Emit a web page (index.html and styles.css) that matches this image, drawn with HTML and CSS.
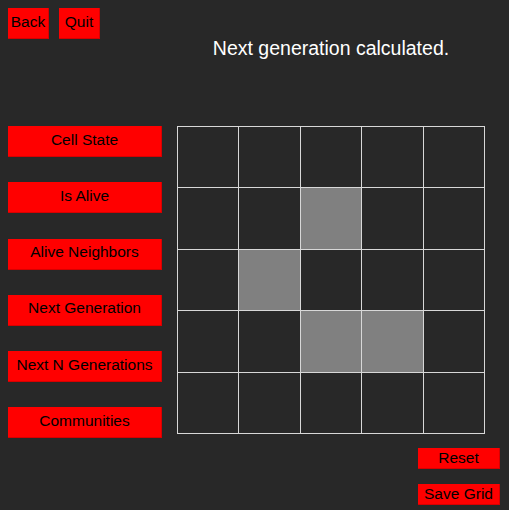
FILE: index.html
```html
<!DOCTYPE html>
<html>
<head>
<meta charset="utf-8">
<link rel="stylesheet" href="styles.css">
</head>
<body>
<div class="app">
  <div class="header-left">
    <button class="btn small">Back</button>
    <button class="btn small">Quit</button>
  </div>
  <div class="header-right">
    <div class="status">Next generation calculated.</div>
  </div>
  <div class="actions">
    <button class="btn wide">Cell State</button>
    <button class="btn wide">Is Alive</button>
    <button class="btn wide">Alive Neighbors</button>
    <button class="btn wide">Next Generation</button>
    <button class="btn wide">Next N Generations</button>
    <button class="btn wide">Communities</button>
  </div>
  <div class="board">
    <div class="cell"></div><div class="cell"></div><div class="cell"></div><div class="cell"></div><div class="cell"></div>
    <div class="cell"></div><div class="cell"></div><div class="cell alive"></div><div class="cell"></div><div class="cell"></div>
    <div class="cell"></div><div class="cell alive"></div><div class="cell"></div><div class="cell"></div><div class="cell"></div>
    <div class="cell"></div><div class="cell"></div><div class="cell alive"></div><div class="cell alive"></div><div class="cell"></div>
    <div class="cell"></div><div class="cell"></div><div class="cell"></div><div class="cell"></div><div class="cell"></div>
  </div>
</div>
<div class="footer">
  <button class="btn short">Reset</button>
  <button class="btn short">Save Grid</button>
</div>
</body>
</html>
```
FILE: styles.css
```css
html, body {
  margin: 0;
  padding: 0;
  background: #282828;
  height: 100%;
  overflow: hidden;
}
body {
  font-family: "Liberation Sans", Arial, sans-serif;
  padding: 8px 0 0 8px;
  box-sizing: border-box;
}
.app {
  display: grid;
  grid-template-columns: 154px 308px;
  grid-template-rows: 118px 308px;
  column-gap: 15px;
}
.header-left {
  display: flex;
  gap: 10px;
  align-items: flex-start;
}
.header-right {
  display: flex;
  justify-content: center;
  align-items: flex-start;
}
.status {
  color: #ffffff;
  font-size: 19.5px;
  margin-top: 29px;
  white-space: nowrap;
}
.btn {
  background: #ff0000;
  color: #000000;
  font-family: "Liberation Sans", Arial, sans-serif;
  font-size: 15.5px;
  border: none;
  border-right: 1px solid #d80000;
  border-bottom: 1px solid #d80000;
  padding: 0;
  margin: 0;
  box-sizing: border-box;
  text-align: center;
  white-space: nowrap;
  display: block;
  flex-shrink: 0;
}
.small {
  width: 41px;
  height: 31px;
  line-height: 26px;
  padding-bottom: 3px;
}
.wide {
  width: 154px;
  height: 31px;
  line-height: 26px;
  padding-bottom: 3px;
}
.short {
  width: 82px;
  height: 21px;
  line-height: 19px;
  padding-bottom: 1px;
}
.actions {
  display: flex;
  flex-direction: column;
  gap: 25.3px;
}
.board {
  width: 308px;
  height: 308px;
  box-sizing: border-box;
  background: #d8d8d8;
  padding: 1px;
  display: grid;
  grid-template-columns: repeat(5, 1fr);
  grid-template-rows: repeat(5, 1fr);
  gap: 1px;
}
.cell {
  background: #282828;
}
.cell.alive {
  background: #808080;
}
.footer {
  display: flex;
  flex-direction: column;
  align-items: flex-end;
  gap: 15px;
  margin-top: 14px;
  padding-right: 9px;
}
```
